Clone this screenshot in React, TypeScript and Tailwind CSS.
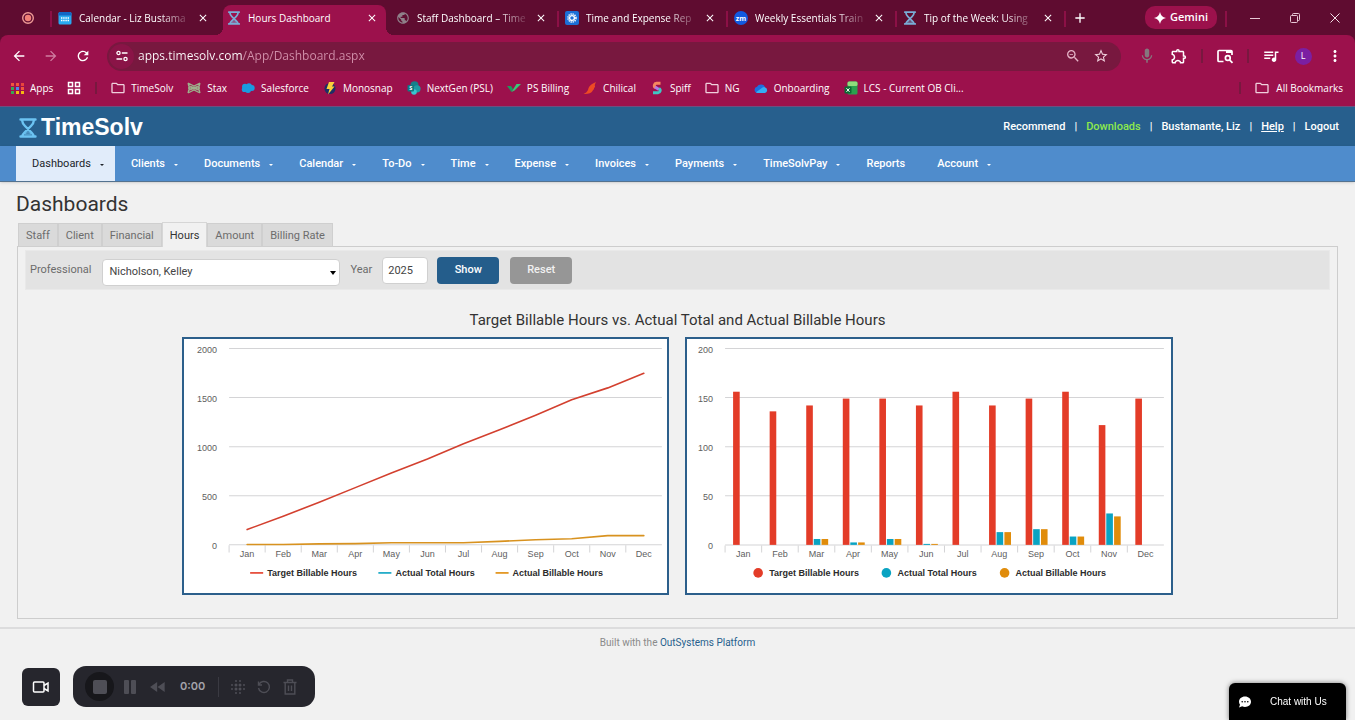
import type { ReactNode } from "react";
import {
  MdAdd,
  MdArrowBack,
  MdArrowForward,
  MdClose,
  MdFastRewind,
  MdMic,
  MdMoreVert,
  MdOutlineExtension,
  MdOutlineFolder,
  MdPublic,
  MdQueueMusic,
  MdRefresh,
  MdStarBorder,
  MdZoomOut,
} from "react-icons/md";

const MONTHS = ["Jan", "Feb", "Mar", "Apr", "May", "Jun", "Jul", "Aug", "Sep", "Oct", "Nov", "Dec"];

const TARGET = [156, 136, 142, 149, 149, 142, 156, 142, 149, 156, 122, 149];
const ACTUAL_TOTAL = [0, 0, 6, 2.5, 6, 1, 0, 13, 16, 8.5, 32, 0];
const ACTUAL_BILLABLE = [0, 0, 6, 2.5, 6, 1, 0, 13, 16, 8.5, 29, 0];
const RUNNING_BILLABLE = [4, 4, 10, 13, 21, 22, 22, 36, 52, 62, 94, 94];

const RED = "#e33c28";
const TEAL = "#0aa3c2";
const ORANGE = "#e08c0b";

const SERIES = [
  { name: "Target Billable Hours", color: RED },
  { name: "Actual Total Hours", color: TEAL },
  { name: "Actual Billable Hours", color: ORANGE },
];

function Hourglass({ className, color }: { className: string; color: string }) {
  return (
    <svg viewBox="0 0 18 20" className={className} fill="none" stroke={color} strokeWidth="2.400" strokeLinejoin="round" strokeLinecap="round">
      <path d="M1.500 1.500h15M3 2c.2 2.500 1 4 3 6l6.500 6.500c1.200 1.200 2 2.300 2.500 4M15 2c-.2 2.500-1 4-3 6l-6.500 6.500c-1.200 1.200-2 2.300-2.500 4M1.500 18.500h15" />
      <path d="M6 16 9 13.500l3 2.500z" fill={color} fillOpacity="0.3" strokeWidth="0.800" />
    </svg>
  );
}

function CalendarIcon() {
  return (
    <svg viewBox="0 0 14 14" className="size-3.5">
      <rect x="0.500" y="1" width="13" height="12.500" rx="1.500" fill="#29a9f0" />
      <path d="M.5 2.500A1.500 1.500 0 0 1 2 1h10a1.500 1.500 0 0 1 1.500 1.500V4.500H.5z" fill="#1266c4" />
      <path d="M3 7h8M3 9.500h8" stroke="#fff" strokeWidth="1.400" strokeDasharray="1.400 .8" />
    </svg>
  );
}

function GearIcon() {
  return (
    <svg viewBox="0 0 14 14" className="size-3.5">
      <rect width="14" height="14" rx="2" fill="#1c6fd6" />
      <circle cx="7" cy="7" r="4" fill="none" stroke="#fff" strokeWidth="1.500" strokeDasharray="1.300 .8" />
      <circle cx="7" cy="7" r="2.400" fill="none" stroke="#fff" strokeWidth="1.300" />
    </svg>
  );
}

function ZoomBadge() {
  return (
    <span className="flex size-3.5 items-center justify-center rounded-full bg-[#1259e0] text-[7px] leading-none font-bold text-white">
      zm
    </span>
  );
}

const TABS = [
  { title: "Calendar - Liz Bustama", icon: <CalendarIcon /> },
  { title: "Hours Dashboard", icon: <Hourglass className="h-3.5 w-3.5" color="#79add6" />, active: true },
  { title: "Staff Dashboard – Time", icon: <MdPublic className="size-3.5 text-[#8f8089]" /> },
  { title: "Time and Expense Rep", icon: <GearIcon /> },
  { title: "Weekly Essentials Train", icon: <ZoomBadge /> },
  { title: "Tip of the Week: Using", icon: <Hourglass className="h-3.5 w-3.5" color="#79add6" /> },
];

const BOOKMARKS: { label: string; icon: ReactNode }[] = [
  { label: "TimeSolv", icon: <MdOutlineFolder className="size-4" /> },
  {
    label: "Stax",
    icon: (
      <svg viewBox="0 0 14 14" className="size-3.5" fill="none" stroke="#9db08c" strokeWidth="1.300">
        <path d="M1 2l6 3 6-3M1 4.500l6 2 6-2M1 7h12M1 9.500l6-2 6 2M1 12l6-3 6 3M1 2l1.500 5L1 12M13 2l-1.500 5 1.500 5" />
      </svg>
    ),
  },
  {
    label: "Salesforce",
    icon: (
      <svg viewBox="0 0 14 14" className="size-3.5" fill="#1a9be0">
        <circle cx="4" cy="5.800" r="3" />
        <circle cx="8" cy="5" r="2.800" />
        <circle cx="10.800" cy="7" r="2.900" />
        <circle cx="3.400" cy="8.500" r="2.600" />
        <circle cx="7" cy="9" r="3" />
      </svg>
    ),
  },
  {
    label: "Monosnap",
    icon: (
      <svg viewBox="0 0 14 14" className="size-3.5">
        <circle cx="7" cy="7.500" r="5.500" fill="#1d2f66" />
        <path d="M6 1h5.500L9 5.500h2.500L5 13.500 6.500 8H3.500z" fill="#fbd03b" />
      </svg>
    ),
  },
  {
    label: "NextGen (PSL)",
    icon: (
      <svg viewBox="0 0 14 14" className="size-3.5">
        <circle cx="7.500" cy="4.200" r="4" fill="#16808a" />
        <circle cx="10" cy="7.800" r="3.600" fill="#1d9aa3" />
        <circle cx="7" cy="11" r="2.800" fill="#37c6d0" />
        <rect x="0.500" y="4" width="6.500" height="6.500" rx="1" fill="#0e7a82" />
        <text x="3.700" y="9.200" fontSize="5.500" fontWeight="700" textAnchor="middle" fill="#fff">S</text>
      </svg>
    ),
  },
  {
    label: "PS Billing",
    icon: (
      <svg viewBox="0 0 14 14" className="size-3.5">
        <path d="M0 5h4l2 3-1.500 3z" fill="#1c9a5c" />
        <path d="M4.500 11 9.500 3H14L7.500 9.500z" fill="#39c878" />
      </svg>
    ),
  },
  {
    label: "Chilical",
    icon: (
      <svg viewBox="0 0 14 14" className="size-3.5">
        <path d="M13 1c-1 .5-2 .8-3 1.500C7 4 5.500 6 5 9c-1 2-2.500 3.300-4.500 4 4 .5 8-1 9-3 .3-1 1.700-1.500 1.600-3 1.300-1 1-2 .6-2.700C12 3 12.500 2 13 1z" fill="#ee4a24" />
      </svg>
    ),
  },
  {
    label: "Spiff",
    icon: (
      <svg viewBox="0 0 14 14" className="size-3.5" fill="none" strokeWidth="3">
        <path d="M10.500 2.200H6.500a2.300 2.300 0 0 0-1 4.300" stroke="#f6875f" />
        <path d="M5 6l4 2.500" stroke="#b07be8" />
        <path d="M9 7.500a2.300 2.300 0 0 1-1 4.300H3" stroke="#3fc7c4" />
      </svg>
    ),
  },
  { label: "NG", icon: <MdOutlineFolder className="size-4" /> },
  {
    label: "Onboarding",
    icon: (
      <svg viewBox="0 0 14 14" className="size-3.5">
        <path d="M3.500 12a3.200 3.200 0 0 1-.5-6.300A4.500 4.500 0 0 1 11 6l-4 4z" fill="#1c6fe0" />
        <path d="M2 11.300 8.500 6.500a3.300 3.300 0 0 1 2.300-.3A3 3 0 0 1 11 12H3.500a3 3 0 0 1-1.500-.7z" fill="#34aef5" />
      </svg>
    ),
  },
  {
    label: "LCS - Current OB Cli...",
    icon: (
      <svg viewBox="0 0 14 14" className="size-3.5">
        <rect x="3.500" y="0.500" width="10" height="13" rx="1.500" fill="#2aa14e" />
        <rect x="3.500" y="0.500" width="10" height="4.500" rx="1.500" fill="#8fdd7c" />
        <rect x="0.500" y="5.500" width="7" height="7" rx="1" fill="#0c6b34" />
        <path d="M2.500 7.300l3 3.500M5.500 7.300l-3 3.500" stroke="#fff" />
      </svg>
    ),
  },
];

const APP_DOTS = ["#f2553c", "#f2553c", "#e8453c", "#37a853", "#4f86ec", "#f2553c", "#37a853", "#f5b912", "#f5b912"];

function TabStrip() {
  return (
    <div className="flex h-[35px] items-stretch overflow-hidden">
      <div className="flex w-[50px] shrink-0 items-center justify-end pr-[15px]">
        <svg viewBox="0 0 14 14" className="size-3.5">
          <circle cx="7" cy="7" r="5.300" fill="none" stroke="#ee9a96" strokeWidth="1.400" />
          <circle cx="7" cy="7" r="3.200" fill="#f08078" />
        </svg>
      </div>
      {TABS.map((tab, index) => (
        <div key={tab.title} className="flex w-[169px] items-stretch pt-[5px]">
          <span className={index === 1 || index === 2 ? "w-0.5" : "mt-1.5 h-4 w-0.5 bg-[#8c1046]"} />
          <div
            className={
              tab.active
                ? "relative mx-0.5 flex min-w-0 flex-1 items-center rounded-t-lg bg-[#9c114c] pr-2 pb-1 pl-1 before:absolute before:bottom-0 before:-left-2 before:size-2 before:bg-[radial-gradient(circle_at_top_left,transparent_8px,#9c114c_8px)] after:absolute after:-right-2 after:bottom-0 after:size-2 after:bg-[radial-gradient(circle_at_top_right,transparent_8px,#9c114c_8px)]"
                : "mx-0.5 flex min-w-0 flex-1 items-center pr-2 pb-1 pl-1"
            }
          >
            <span className="shrink-0">{tab.icon}</span>
            <a
              href="#tab"
              className={
                tab.active
                  ? "ml-[7px] flex-1 whitespace-nowrap"
                  : "ml-[7px] flex-1 whitespace-nowrap [mask-image:linear-gradient(to_right,black_80px,transparent_114px)]"
              }
            >
              {tab.title}
            </a>
            <button aria-label="Close tab">
              <MdClose className="size-3" />
            </button>
          </div>
        </div>
      ))}
      <span className="mt-[11px] h-4 w-0.5 bg-[#8c1046]" />
      <button aria-label="New tab" className="ml-1.5">
        <MdAdd className="size-4" />
      </button>
      <button className="my-[6px] ml-auto flex w-[72px] items-center justify-center gap-1 rounded-[10px] bg-[#9c114c] text-[11px] font-semibold">
        <svg viewBox="0 0 12 12" className="size-3" fill="#fff">
          <path d="M6 0c.7 3.500 2.500 5.300 6 6-3.500.7-5.300 2.500-6 6-.7-3.500-2.500-5.300-6-6 3.500-.7 5.300-2.500 6-6z" />
        </svg>
        Gemini
      </button>
      <span className="mt-[11px] mr-2 ml-2 h-4 w-0.5 bg-[#8c1046]" />
      <button aria-label="Minimize" className="flex w-10 items-center justify-center">
        <svg viewBox="0 0 10 10" className="size-2.5" stroke="#e8c8d6"><path d="M0 5.500h10" /></svg>
      </button>
      <button aria-label="Restore" className="flex w-10 items-center justify-center">
        <svg viewBox="0 0 10 10" className="size-2.5" fill="none" stroke="#e8c8d6">
          <rect x="0.500" y="2.500" width="7" height="7" rx="1" />
          <path d="M2.500 2.500V1.500a1 1 0 0 1 1-1h5a1 1 0 0 1 1 1v5a1 1 0 0 1-1 1h-1" />
        </svg>
      </button>
      <button aria-label="Close" className="flex w-10 items-center justify-center">
        <svg viewBox="0 0 10 10" className="size-2.5" stroke="#f3dfe7"><path d="M.5.5l9 9M9.500.5l-9 9" /></svg>
      </button>
    </div>
  );
}

function AddressBar() {
  return (
    <div className="flex h-[42px] items-center pr-[10px] pl-[11px]">
      <button aria-label="Back"><MdArrowBack className="size-4" /></button>
      <button aria-label="Forward" className="ml-4 text-[#cf7da0]"><MdArrowForward className="size-4" /></button>
      <button aria-label="Reload" className="ml-4"><MdRefresh className="size-4" /></button>
      <div className="ml-4 flex h-[29px] min-w-0 flex-1 items-center rounded-full bg-[#78183f] pr-3 pl-0.5">
        <span className="flex size-[25px] shrink-0 items-center justify-center rounded-full bg-[#8a1447]">
          <svg viewBox="0 0 12 12" className="size-3" fill="none" stroke="#fff" strokeWidth="1.300">
            <circle cx="2.500" cy="3" r="1.600" />
            <circle cx="9.500" cy="9" r="1.600" />
            <path d="M5.800 3H11.500M.5 9h5.700" />
          </svg>
        </span>
        <input
          aria-label="Address"
          defaultValue="apps.timesolv.com/App/Dashboard.aspx"
          className="ml-1 min-w-0 flex-1 bg-[linear-gradient(to_right,#fff_105px,#d291ab_105px)] bg-clip-text text-xs text-transparent"
        />
        <MdZoomOut className="size-4 text-[#e5b3c7]" />
        <MdStarBorder className="ml-3 size-4 text-[#f0d0dc]" />
      </div>
      <div className="ml-4 flex items-center gap-3">
        <MdMic className="size-5 p-px text-[#85777e]" />
        <MdOutlineExtension className="size-5 p-px" />
        <span className="h-3.5 w-0.5 bg-[#78183f]" />
        <svg viewBox="0 0 20 20" className="size-5" fill="none" stroke="#fff" strokeWidth="1.700">
          <path d="M8.500 15.500H4a1 1 0 0 1-1-1v-9a1 1 0 0 1 1-1h12a1 1 0 0 1 1 1V9" />
          <path d="M11 5.500h6" strokeWidth="3" />
          <circle cx="12.800" cy="12" r="2.400" />
          <path d="M14.500 13.800l3 3" />
        </svg>
        <span className="h-3.5 w-0.5 bg-[#78183f]" />
        <MdQueueMusic className="size-5 p-px" />
        <span className="flex size-5 items-center justify-center">
          <span className="flex size-[17px] items-center justify-center rounded-full bg-[#7b1fa2] text-[9px]">L</span>
        </span>
        <MdMoreVert className="size-5 p-px" />
      </div>
    </div>
  );
}

function BookmarkBar() {
  return (
    <div className="flex h-[29px] items-start pt-[3px] pr-3 pl-[11px]">
      <a href="#apps" className="flex h-4 items-center gap-[5px]">
        <span className="grid size-3.5 grid-cols-3 content-center justify-center gap-px">
          {APP_DOTS.map((color, index) => (
            <span key={index} className="size-[3px]" style={{ backgroundColor: color }} />
          ))}
        </span>
        Apps
      </a>
      <svg viewBox="0 0 14 14" className="mt-px ml-[14px] size-3.5" fill="none" stroke="#fff" strokeWidth="1.500">
        <path d="M1.500 1.500h4v4h-4zM8.500 1.500h4v4h-4zM1.500 8.500h4v4h-4zM8.500 8.500h4v4h-4z" />
      </svg>
      <span className="mt-0.5 mr-[13px] ml-[14px] h-3 w-0.5 bg-[#78183f]" />
      <div className="flex gap-[13px]">
        {BOOKMARKS.map((bookmark) => (
          <a key={bookmark.label} href="#bookmark" className="flex h-4 items-center gap-[5px] whitespace-nowrap">
            <span className="flex w-4 justify-center text-[#efd0dc]">{bookmark.icon}</span>
            {bookmark.label}
          </a>
        ))}
      </div>
      <span className="mt-0.5 mr-[13px] ml-auto h-3 w-0.5 bg-[#78183f]" />
      <a href="#all" className="flex h-4 items-center gap-[6px] whitespace-nowrap">
        <MdOutlineFolder className="size-4 text-[#efd0dc]" />
        All Bookmarks
      </a>
    </div>
  );
}

const MENU = [
  "Dashboards",
  "Clients",
  "Documents",
  "Calendar",
  "To-Do",
  "Time",
  "Expense",
  "Invoices",
  "Payments",
  "TimeSolvPay",
  "Reports",
  "Account",
];

function SiteHeader() {
  return (
    <header>
      <div className="flex h-10 items-center justify-between border-t border-[#6c4f80] bg-[#275f8d] px-4 pt-0.5">
        <a href="#home" className="flex items-center pl-[3px] text-white">
          <Hourglass className="h-5 w-[18px]" color="#6cc3f2" />
          <span className="ml-1 font-['Liberation_Sans',sans-serif] text-[23px] leading-none font-bold">TimeSolv</span>
        </a>
        <div className="flex gap-[9px] font-medium text-white">
          <a href="#recommend">Recommend</a>|
          <a href="#downloads" className="text-[#8eea4c]">Downloads</a>|
          <a href="#user">Bustamante, Liz</a>|
          <a href="#help" className="underline">Help</a>|
          <a href="#logout">Logout</a>
        </div>
      </div>
      <nav className="flex h-9 border-b border-[#54728f] bg-[#4f8ccc] pl-4 text-white shadow-sm">
        {MENU.map((item) => (
          <a
            key={item}
            href="#menu"
            className={
              item === "Dashboards"
                ? "flex items-center bg-[#e1ecfa] pt-0.5 pr-[11px] pl-4 text-[#20242a]"
                : item === "Reports"
                  ? "flex items-center px-4 pt-0.5 font-medium"
                  : "flex items-center pt-0.5 pr-2.5 pl-4 font-medium"
            }
          >
            {item}
            {item !== "Reports" && (
              <span className="ml-[9px] border-x-2 border-t-2 border-x-transparent border-t-current" />
            )}
          </a>
        ))}
      </nav>
    </header>
  );
}

const VIEWS = ["Staff", "Client", "Financial", "Hours", "Amount", "Billing Rate"];

function ChartAxes({ left, step, labels }: { left: number; step: number; labels: number[] }) {
  const right = left + step * 12;
  return (
    <>
      {labels.map((label, index) => (
        <g key={label}>
          <path d={`M${left} ${9.5 + index * 49}H${right}`} stroke="#d4d4d6" />
          <text x={left - 12} y={14 + index * 49} textAnchor="end">{label}</text>
        </g>
      ))}
      {MONTHS.map((month, index) => (
        <g key={month}>
          <path d={`M${left + index * step} 206v7`} stroke="#d4d4d6" />
          <text x={left + (index + 0.5) * step} y="218" textAnchor="middle">{month}</text>
        </g>
      ))}
    </>
  );
}

function LineChart() {
  const x = (index: number) => 63 + index * 36;
  const y = (value: number) => 205.5 - (value / 2000) * 196;
  let sum = 0;
  const running = TARGET.map((value) => (sum += value));
  const points = (values: number[]) => values.map((value, index) => `${x(index)},${y(value)}`).join(" ");
  const legend = [66, 194, 311];

  return (
    <svg viewBox="0 0 483 254" className="w-full font-['Liberation_Sans',sans-serif] text-[9px]" fill="#606060">
      <ChartAxes left={45} step={36} labels={[2000, 1500, 1000, 500, 0]} />
      <g fill="none" strokeWidth="1.600" strokeLinecap="round" strokeLinejoin="round">
        <polyline points={points(running)} stroke="#d3402f" />
        <polyline points={points(RUNNING_BILLABLE)} stroke="#d8921f" />
      </g>
      {SERIES.map((series, index) => (
        <g key={series.name}>
          <path d={`M${legend[index]} 233.500h13`} stroke={series.color} strokeWidth="1.600" />
          <text x={legend[index] + 17} y="237" fontWeight="700" fill="#2b2b2b">{series.name}</text>
        </g>
      ))}
    </svg>
  );
}

function BarChart() {
  const bars = [
    { values: TARGET, color: RED, offset: 8 },
    { values: ACTUAL_TOTAL, color: TEAL, offset: 15.5 },
    { values: ACTUAL_BILLABLE, color: ORANGE, offset: 23.3 },
  ];
  const legend = [71, 199, 317];

  return (
    <svg viewBox="0 0 483 254" className="w-full font-['Liberation_Sans',sans-serif] text-[9px]" fill="#606060">
      <ChartAxes left={38} step={36.5} labels={[200, 150, 100, 50, 0]} />
      {bars.map((bar) =>
        bar.values.map((value, index) => (
          <rect
            key={`${bar.color}${index}`}
            x={38 + index * 36.5 + bar.offset}
            y={205.5 - value * 0.98}
            width="6.600"
            height={value * 0.98}
            fill={bar.color}
          />
        )),
      )}
      {SERIES.map((series, index) => (
        <g key={series.name}>
          <circle cx={legend[index]} cy="233.500" r="4.800" fill={series.color} />
          <text x={legend[index] + 11} y="237" fontWeight="700" fill="#2b2b2b">{series.name}</text>
        </g>
      ))}
    </svg>
  );
}

function Dashboard() {
  return (
    <main className="border-b-2 border-[#dcdcdd] px-4 pt-2.5 pb-2 text-[#6c6c6c]">
      <h1 className="text-[21px] leading-6 text-[#333]">Dashboards</h1>
      <div className="relative mt-[6px] -mb-px ml-0.5 flex items-end">
        {VIEWS.map((view) => (
          <a
            key={view}
            href="#view"
            className={
              view === "Hours"
                ? "border border-b-0 border-[#d6d6d6] bg-[#f1f1f1] px-[7px] pt-[5px] pb-[3px] leading-4 text-[#333]"
                : "border border-[#cfcfcf] bg-[#dadada] px-[7px] pt-1 pb-0.5 leading-4"
            }
          >
            {view}
          </a>
        ))}
      </div>
      <section className="mx-px border border-[#cdcdcd] px-[7px] pt-[3px] pb-[23px]">
        <form className="flex h-10 items-center border border-[#e9e9e9] bg-[#e3e3e3] pl-1" onSubmit={(event) => event.preventDefault()}>
          <label htmlFor="professional">Professional</label>
          <div className="relative mt-1 ml-[11px]">
            <select
              id="professional"
              className="h-[27px] w-[238px] appearance-none rounded-sm border border-[#d0d0d0] bg-white px-1.5 text-[#444]"
            >
              <option>Nicholson, Kelley</option>
            </select>
            <span className="pointer-events-none absolute top-3 right-1 border-x-3 border-t-4 border-x-transparent border-t-black" />
          </div>
          <label htmlFor="year" className="ml-[10px]">Year</label>
          <input
            id="year"
            defaultValue="2025"
            className="ml-[10px] h-[27px] w-[46px] rounded-sm border border-[#d0d0d0] bg-white px-[5px] text-[#444]"
          />
          <button className="ml-[9px] h-[27px] w-[62px] rounded-sm bg-[#245d8b] font-medium text-white">Show</button>
          <button type="reset" className="ml-[11px] h-[27px] w-[62px] rounded-sm bg-[#969696] font-medium text-[#f1f1f1]">
            Reset
          </button>
        </form>
        <h2 className="mt-[21px] text-center text-[15px] leading-[18px] text-[#333]">
          Target Billable Hours vs. Actual Total and Actual Billable Hours
        </h2>
        <div className="mx-auto mt-[8px] grid w-[76%] min-w-[680px] grid-cols-2 gap-4">
          <div className="border-2 border-[#2c5f8b] bg-white"><LineChart /></div>
          <div className="border-2 border-[#2c5f8b] bg-white"><BarChart /></div>
        </div>
      </section>
    </main>
  );
}

function Recorder() {
  return (
    <div className="fixed bottom-[13px] left-[22px] flex items-center gap-[13px]">
      <button aria-label="Camera" className="flex size-[38px] items-center justify-center rounded-md bg-[#26262d]">
        <svg viewBox="0 0 18 14" className="h-3.5 w-[18px]" fill="none" stroke="#fff" strokeWidth="1.500">
          <rect x="1.500" y="2" width="10.500" height="10" rx="1" />
          <path d="M12 5.500l4-2.500v8l-4-2.500" />
        </svg>
      </button>
      <div className="flex h-[41px] w-[242px] items-center rounded-[13px] bg-[#26262d] pl-3 text-[#4e4e56]">
        <button aria-label="Stop" className="flex size-[29px] items-center justify-center rounded-full bg-[#17171b]">
          <span className="size-3.5 rounded-xs bg-current" />
        </button>
        <button aria-label="Pause" className="ml-1.5">
          <svg viewBox="0 0 20 20" className="size-5" fill="currentColor">
            <rect x="4" y="3" width="5" height="14" rx="1" />
            <rect x="11" y="3" width="5" height="14" rx="1" />
          </svg>
        </button>
        <button aria-label="Rewind" className="ml-2"><MdFastRewind className="size-5" /></button>
        <span className="ml-3 w-[38px] font-['Inter',sans-serif] font-semibold text-[#a3a3aa]">0:00</span>
        <span className="h-5 w-px bg-[#3a3a42]" />
        <button aria-label="Effects" className="ml-3">
          <svg viewBox="0 0 14 14" className="size-3.5" stroke="currentColor" strokeWidth="2" strokeLinecap="round">
            <path d="M5 1v0M9 1v0M1 5v0M5 5v0M9 5v0M13 5v0M1 9v0M5 9v0M9 9v0M13 9v0M5 13v0M9 13v0" />
            <path d="M5 5v0M9 5v0M5 9v0M9 9v0" strokeWidth="3" />
          </svg>
        </button>
        <button aria-label="Restart" className="ml-3">
          <svg viewBox="0 0 14 14" className="size-3.5" fill="none" stroke="currentColor" strokeWidth="1.400">
            <path d="M2 4.500A5.500 5.500 0 1 1 1.500 8M1.500 1.500v3.500H5" />
          </svg>
        </button>
        <button aria-label="Delete" className="ml-3">
          <svg viewBox="0 0 14 16" className="h-4 w-3.5" fill="none" stroke="currentColor" strokeWidth="1.400">
            <path d="M0.500 3.500h13M4.500 3.500v-2.500h5v2.500M2.200 3.500v11.500h9.600V3.500M5.500 6.500v5.500M8.500 6.500v5.500" />
          </svg>
        </button>
      </div>
    </div>
  );
}

export default function App() {
  return (
    <div className="min-h-screen bg-[#f1f1f1] font-['Roboto',sans-serif] text-[11px]">
      <div className="bg-[#5f0c30] font-['Open_Sans',sans-serif] text-[10px] text-white">
        <TabStrip />
        <div className="rounded-t-lg bg-[#9c114c]">
          <AddressBar />
          <BookmarkBar />
        </div>
      </div>
      <SiteHeader />
      <Dashboard />
      <footer className="pt-1.5 text-center text-[10px] leading-4 text-[#8a8a8a]">
        Built with the <a href="#platform" className="text-[#275f8d]">OutSystems Platform</a>
      </footer>
      <Recorder />
      <button className="fixed right-[9px] bottom-0 flex h-[37px] w-[117px] items-center rounded-t-md bg-black pl-[9px] font-['Liberation_Sans',sans-serif] text-[10px] text-white shadow-[0_0_5px_rgba(0,0,0,0.5)]">
        <svg viewBox="0 0 14 14" className="size-3.5">
          <path d="M7 1.500c3.500 0 6 2.300 6 5.200s-2.500 5.200-6 5.200c-1 0-2-.2-2.800-.6L1 12.500l1-2.800a5 5 0 0 1-1-3C1 3.800 3.500 1.500 7 1.500z" fill="#fff" />
          <path d="M4.200 6.800v0M7 6.800v0M9.800 6.800v0" stroke="#000" strokeWidth="1.600" strokeLinecap="round" />
        </svg>
        <span className="ml-[18px]">Chat with Us</span>
      </button>
    </div>
  );
}
